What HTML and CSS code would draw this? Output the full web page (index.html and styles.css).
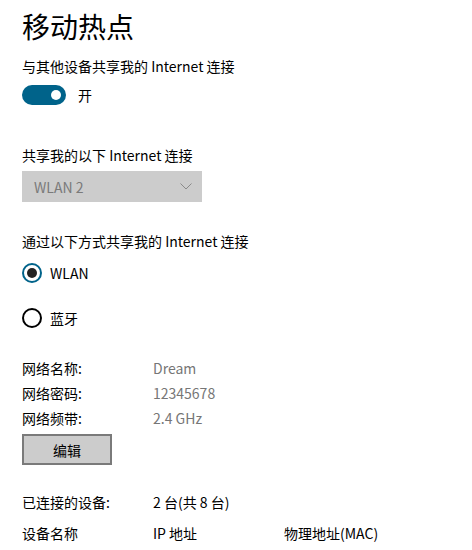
FILE: index.html
```html
<!DOCTYPE html>
<html lang="zh-CN">
<head>
<meta charset="utf-8">
<title>移动热点</title>
<link rel="stylesheet" href="styles.css">
</head>
<body>
<div class="page">
  <h1 class="title">移动热点</h1>
  <div class="label share-label">与其他设备共享我的 Internet 连接</div>
  <div class="toggle-row">
    <span class="toggle"><span class="knob"></span></span>
    <span class="toggle-text">开</span>
  </div>

  <div class="label from-label">共享我的以下 Internet 连接</div>
  <div class="select">
    <span class="select-text">WLAN 2</span>
    <svg class="chevron" width="12" height="7" viewBox="0 0 12 7"><path d="M0.5 0.5 L6 6 L11.5 0.5" fill="none" stroke="#8a8a8a" stroke-width="1"/></svg>
  </div>

  <div class="label via-label">通过以下方式共享我的 Internet 连接</div>
  <div class="radio-row first">
    <span class="radio checked"><span class="dot"></span></span>
    <span class="radio-text">WLAN</span>
  </div>
  <div class="radio-row second">
    <span class="radio"></span>
    <span class="radio-text">蓝牙</span>
  </div>

  <div class="info">
    <div class="info-row"><span class="key">网络名称:</span><span class="val">Dream</span></div>
    <div class="info-row"><span class="key">网络密码:</span><span class="val">12345678</span></div>
    <div class="info-row"><span class="key">网络频带:</span><span class="val">2.4 GHz</span></div>
  </div>
  <button class="edit-btn">编辑</button>

  <div class="info-row connected"><span class="key">已连接的设备:</span><span class="val dark">2 台(共 8 台)</span></div>
  <div class="table-head">
    <span class="col1">设备名称</span>
    <span class="col2">IP 地址</span>
    <span class="col3">物理地址(MAC)</span>
  </div>
</div>
</body>
</html>
```

FILE: styles.css
```css
* { box-sizing: border-box; }
html, body { margin: 0; padding: 0; background: #ffffff; }
body {
  font-family: "Noto Sans CJK SC", "Noto Sans", sans-serif;
  font-size: 14px;
  color: #000000;
  overflow: hidden;
}
.page {
  padding: 8px 0 0 22px;
  width: 472px;
  height: 550px;
}
.title {
  margin: 0;
  font-size: 28px;
  font-weight: 400;
  line-height: 36px;
  height: 36px;
}
.label {
  line-height: 20px;
  height: 20px;
}
.share-label { margin-top: 12px; }
.toggle-row {
  margin-top: 9px;
  display: flex;
  align-items: center;
  height: 20px;
}
.toggle {
  width: 44px;
  height: 20px;
  border-radius: 10px;
  background: #00638a;
  display: flex;
  align-items: center;
  justify-content: flex-end;
  padding-right: 5px;
}
.knob {
  width: 10px;
  height: 10px;
  border-radius: 50%;
  background: #ffffff;
}
.toggle-text {
  margin-left: 12px;
  line-height: 20px;
}
.from-label { margin-top: 40px; }
.select {
  margin-top: 6px;
  width: 180px;
  height: 31px;
  background: #cccccc;
  display: flex;
  align-items: center;
  justify-content: space-between;
  padding: 0 10px 0 12px;
}
.select-text { color: #7a7a7a; line-height: 20px; }
.chevron { display: block; }
.via-label { margin-top: 29px; }
.radio-row {
  display: flex;
  align-items: center;
  height: 20px;
}
.radio-row.first { margin-top: 12px; }
.radio-row.second { margin-top: 25px; }
.radio {
  width: 20px;
  height: 20px;
  border-radius: 50%;
  border: 2px solid #000000;
  display: flex;
  align-items: center;
  justify-content: center;
}
.radio.checked { border-color: #00638a; }
.dot {
  width: 10px;
  height: 10px;
  border-radius: 50%;
  background: #222222;
}
.radio-text { margin-left: 8px; line-height: 20px; }
.info { margin-top: 28px; }
.info-row {
  display: flex;
  height: 25px;
  line-height: 25px;
}
.key { width: 131px; }
.val { color: #767676; }
.val.dark { color: #000000; }
.edit-btn {
  margin-top: 3px;
  display: block;
  width: 90px;
  height: 31px;
  background: #cccccc;
  border: 2px solid #7a7a7a;
  font-family: inherit;
  font-size: 14px;
  color: #000000;
  padding: 0;
  line-height: 26px;
}
.connected {
  margin-top: 25px;
}
.table-head {
  margin-top: 6px;
  display: flex;
  height: 25px;
  line-height: 25px;
}
.col1 { width: 131px; }
.col2 { width: 131px; }
```
